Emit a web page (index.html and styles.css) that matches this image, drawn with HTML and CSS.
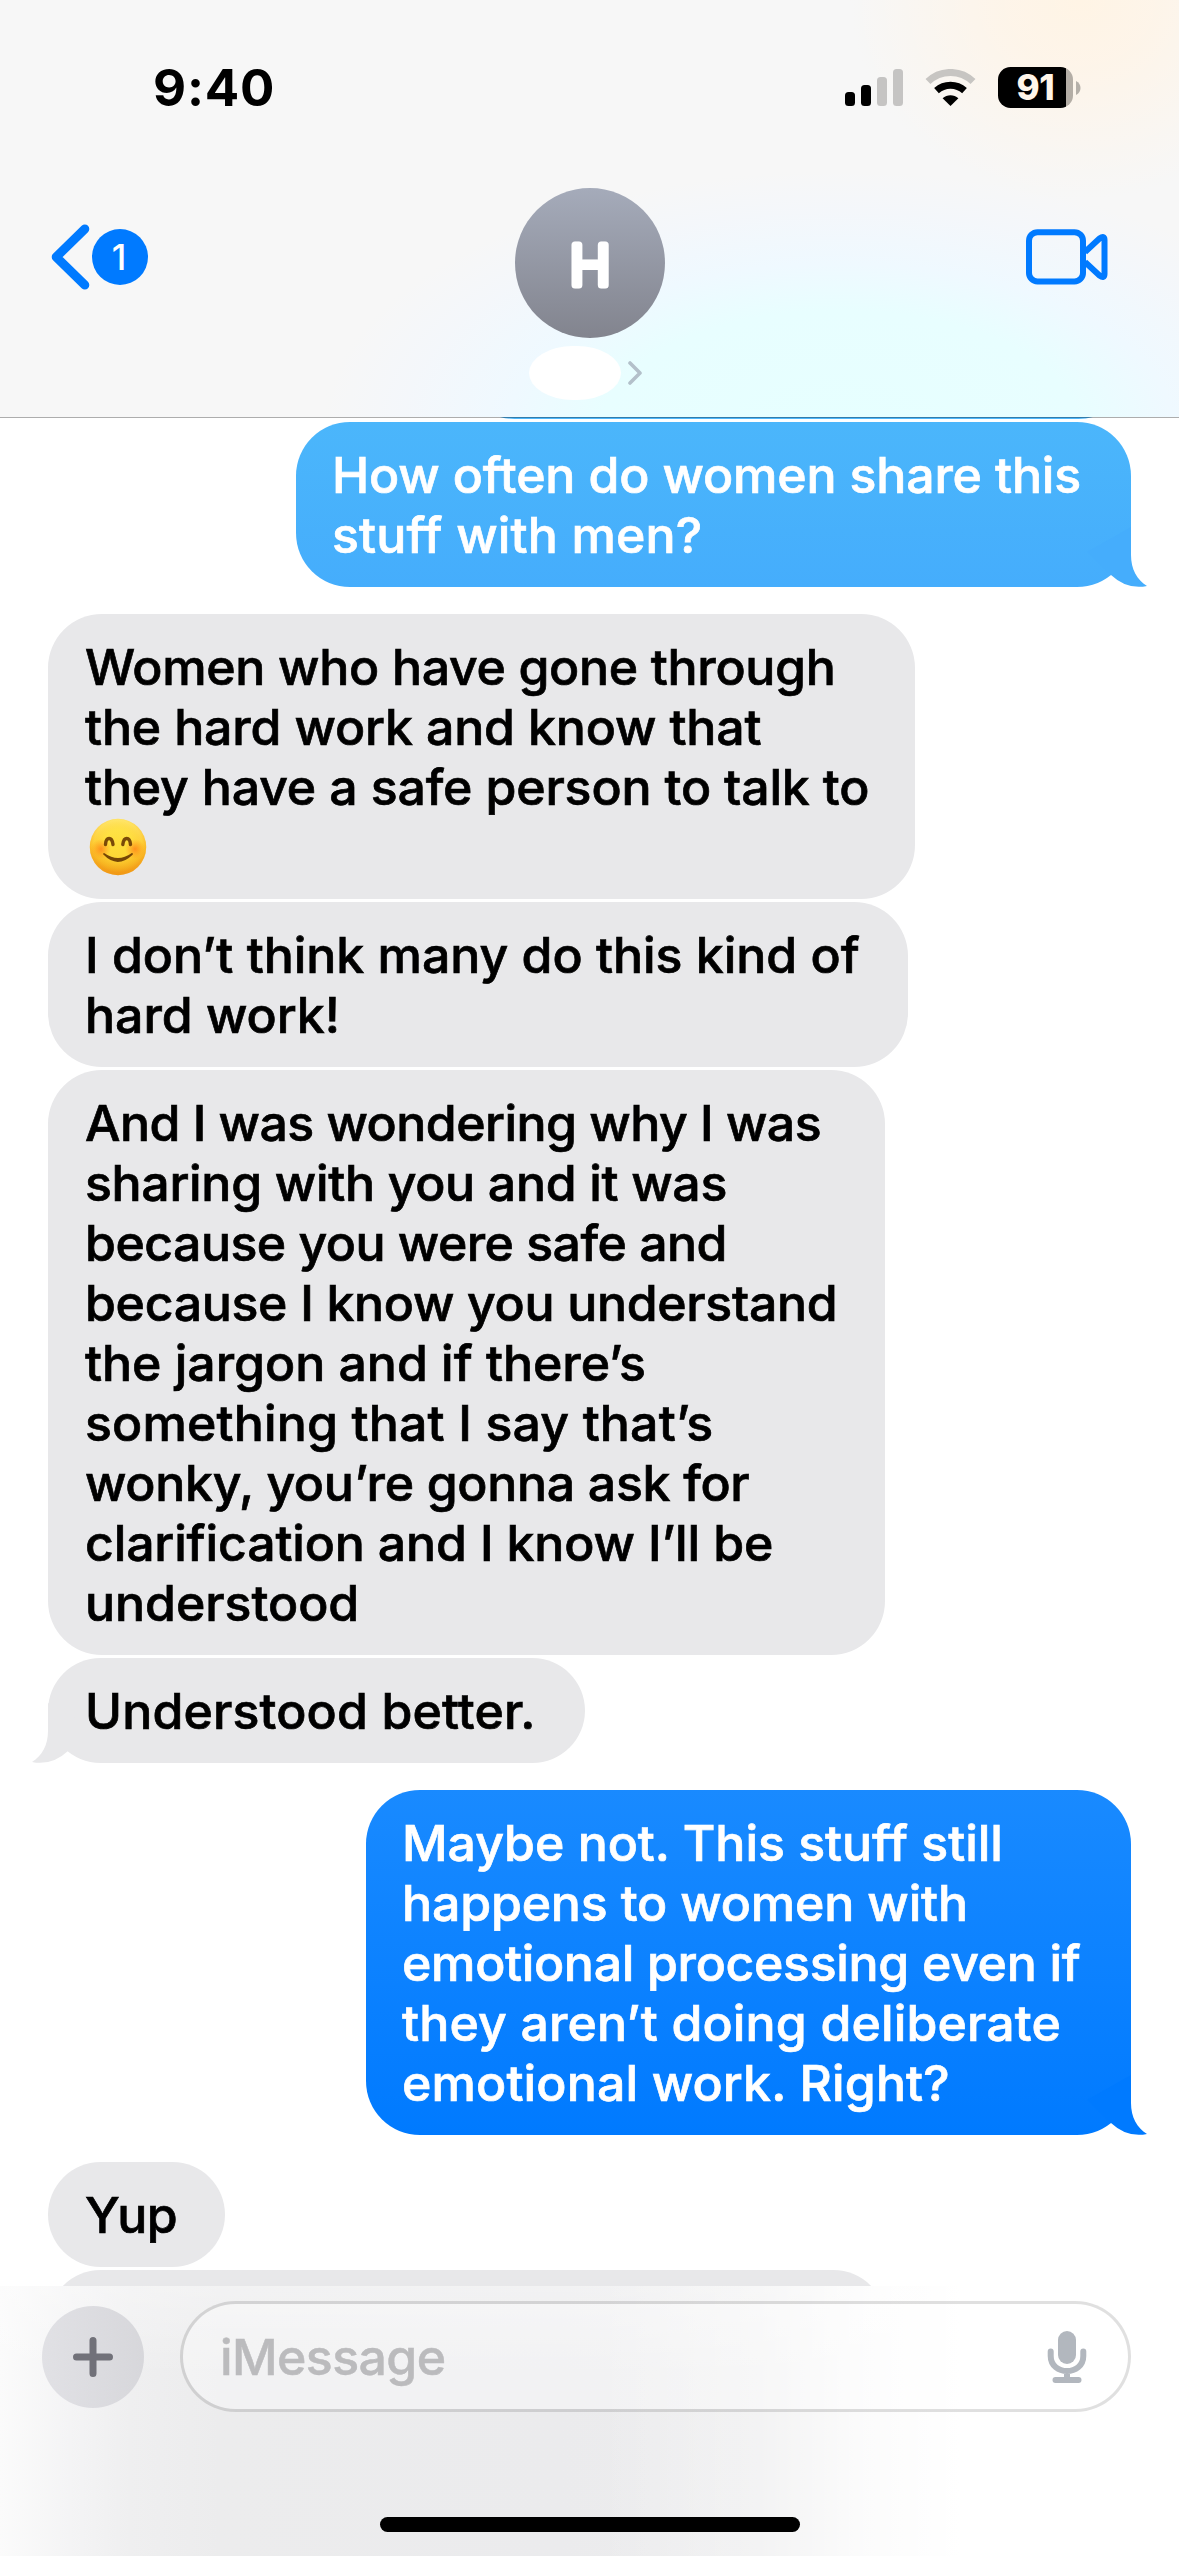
FILE: index.html
```html
<!DOCTYPE html>
<html lang="en">
<head>
<meta charset="utf-8">
<title>Messages</title>
<link rel="stylesheet" href="styles.css">
</head>
<body>
<div class="screen">
  <header class="header">
    <div class="status">
      <time class="clock">9:40</time>
      <div class="indicators">
        <svg class="signal" width="58" height="37" viewBox="0 0 58 37">
          <rect x="0" y="23" width="10" height="14" rx="3.5"/>
          <rect x="16" y="16" width="10" height="21" rx="3.5"/>
          <rect class="dim" x="32" y="8" width="10" height="29" rx="3.5"/>
          <rect class="dim" x="48" y="0" width="10" height="37" rx="3.5"/>
        </svg>
        <svg class="wifi" width="51" height="37" viewBox="0 0 51 37">
          <path class="arc dim-arc" d="M3 12.6C15.500 0.400 35.500 0.400 48 12.600"/>
          <path class="arc" d="M11.500 21.600C19.500 14.300 31.500 14.300 39.500 21.600"/>
          <path d="M25.500 37L17.600 29.200C22 25.300 29 25.300 33.400 29.200Z"/>
        </svg>
        <div class="battery">
          <div class="cell">91</div>
          <svg width="5" height="14" viewBox="0 0 5 14"><path class="cap" d="M0 0C6 3 6 11 0 14Z"/></svg>
        </div>
      </div>
    </div>
    <nav class="nav">
      <div class="back">
        <svg width="40" height="66" viewBox="0 0 40 66"><path d="M33.800 5L5.200 33L33.800 61"/></svg>
        <span class="unread">1</span>
      </div>
      <div class="contact">
        <svg class="avatar" width="150" height="150" viewBox="0 0 150 150">
          <defs><linearGradient id="avatarFill" x1="0" y1="0" x2="0" y2="1"><stop offset="0" stop-color="#a5abba"/><stop offset="1" stop-color="#82848e"/></linearGradient></defs>
          <circle cx="75" cy="75" r="75" fill="url(#avatarFill)"/>
          <text x="75" y="96.500" text-anchor="middle">H</text>
        </svg>
        <div class="name">
          <span class="name-pill"></span>
          <svg width="14" height="24" viewBox="0 0 14 24"><path d="M2 2L12 12L2 22"/></svg>
        </div>
      </div>
      <svg class="video" width="82" height="56" viewBox="0 0 82 56">
        <rect x="3" y="3.200" width="54" height="49.200" rx="8.500"/>
        <path d="M59 23L73.500 9.500Q78.500 6 78.500 11V45Q78.500 50 73.500 46.500L59 33"/>
      </svg>
    </nav>
  </header>

  <main class="thread">
    <div class="bubble sent previous"></div>
    <div class="bubble sent share">
      <span class="line close">How often do women share this</span>
      <span class="line even">stuff with men?</span>
      <svg class="tail" width="60" height="60" viewBox="0 0 60 60"><path d="M44 0V28C44 42 50 53 60 59Q40 63 24 48L0 25Z"/></svg>
    </div>
    <div class="bubble received first w-safe">
      <span class="line snug">Women who have gone through</span>
      <span class="line close">the hard work and know that</span>
      <span class="line close">they have a safe person to talk to</span>
      <span class="line emoji-line"><svg class="emoji" role="img" aria-label="😊" width="58" height="58" viewBox="0 0 58 58">
        <defs>
          <linearGradient id="face" x1="0" y1="0" x2="0" y2="1"><stop offset="0" stop-color="#fff083"/><stop offset=".5" stop-color="#fdc92e"/><stop offset="1" stop-color="#ee9612"/></linearGradient>
          <radialGradient id="glow" cx=".5" cy=".45" r=".5"><stop offset=".5" stop-color="#ffe23c" stop-opacity=".75"/><stop offset=".85" stop-color="#ffd02e" stop-opacity=".3"/><stop offset="1" stop-color="#f59b1a" stop-opacity=".35"/></radialGradient>
          <radialGradient id="blush"><stop offset="0" stop-color="#ff7b16" stop-opacity=".75"/><stop offset="1" stop-color="#ff8a1c" stop-opacity="0"/></radialGradient>
        </defs>
        <circle cx="29" cy="29" r="28.200" fill="url(#face)"/>
        <circle cx="29" cy="29" r="28.200" fill="url(#glow)"/>
        <circle cx="12" cy="31" r="10" fill="url(#blush)"/>
        <circle cx="46" cy="31" r="10" fill="url(#blush)"/>
        <path class="feature" d="M16.500 26.500C17 18.500 23 18.500 24 26.500M33.800 26.500C34.800 18.500 40.800 18.500 41.500 26.500"/>
        <path class="smile" d="M15 36Q28.500 50 43 36Q29 46 15 36Z"/>
      </svg></span>
    </div>
    <div class="bubble received w-kind">
      <span class="line">I don’t think many do this kind of</span>
      <span class="line">hard work!</span>
    </div>
    <div class="bubble received w-jargon">
      <span class="line tight">And I was wondering why I was</span>
      <span class="line snug">sharing with you and it was</span>
      <span class="line tight">because you were safe and</span>
      <span class="line snug">because I know you understand</span>
      <span class="line">the jargon and if there’s</span>
      <span class="line even">something that I say that’s</span>
      <span class="line snug">wonky, you’re gonna ask for</span>
      <span class="line close">clarification and I know I’ll be</span>
      <span class="line">understood</span>
    </div>
    <div class="bubble received w-better">
      <span class="line even">Understood better.</span>
      <svg class="tail" width="60" height="60" viewBox="0 0 60 60"><path d="M44 0V28C44 42 50 53 60 59Q40 63 24 48L0 25Z"/></svg>
    </div>
    <div class="bubble sent maybe first">
      <span class="line">Maybe not. This stuff still</span>
      <span class="line close">happens to women with</span>
      <span class="line snug">emotional processing even if</span>
      <span class="line even">they aren’t doing deliberate</span>
      <span class="line even">emotional work. Right?</span>
      <svg class="tail" width="60" height="60" viewBox="0 0 60 60"><path d="M44 0V28C44 42 50 53 60 59Q40 63 24 48L0 25Z"/></svg>
    </div>
    <div class="bubble received first w-yup"><span class="line tight">Yup</span></div>
    <div class="bubble received next"></div>
  </main>

  <footer class="composer">
    <div class="controls">
      <div class="plus">
        <svg width="40" height="40" viewBox="0 0 40 40"><path d="M20 3.500V36.500M3.500 20H36.500"/></svg>
      </div>
      <div class="field">
        <span class="placeholder">iMessage</span>
        <svg class="mic" width="40" height="54" viewBox="0 0 40 54">
          <rect x="11" y="1" width="18" height="33" rx="9"/>
          <path d="M3.700 21.500V26C3.700 46 36.300 46 36.300 26V21.500M20 41V50M8.500 50H31.500"/>
        </svg>
      </div>
    </div>
    <div class="home-bar"></div>
  </footer>
</div>
</body>
</html>
```
FILE: styles.css
```css
* { box-sizing: border-box; }

body {
  margin: 0;
  background: #fff;
  font-family: Inter, "Liberation Sans", sans-serif;
  font-weight: 500;
}

svg { display: block; flex: none; }

.screen {
  display: flex;
  flex-direction: column;
  width: 1179px;
  height: 2556px;
  overflow: hidden;
  background: #fff;
}

/* Header */
.header {
  position: relative;
  z-index: 1;
  flex: none;
  height: 417px;
  background:
    radial-gradient(ellipse 230px 200px at 1080px 0, #fff4e5 0%, #fff4e6cc 35%, #fff4e600 100%),
    radial-gradient(ellipse 520px 260px at 840px 430px, #e6ffff 0%, #e8feff 46%, #eff9ff 64%, #f2f7fd99 84%, #f7f7f700 100%),
    #f7f7f7;
  box-shadow: 0 1px 0 rgba(0, 0, 0, .32);
}

.status {
  display: flex;
  justify-content: space-between;
  height: 188px;
  padding: 58px 98px 0 153px;
}

.clock {
  font-size: 51px;
  line-height: 60px;
  font-weight: 700;
  letter-spacing: .8px;
}

.indicators {
  display: flex;
  align-items: flex-start;
  padding-top: 9px;
}

.signal, .wifi { margin-top: 2px; }
.signal { margin-right: 22px; }
.wifi { margin-right: 22px; }
.dim { fill: #c5c4c3; }
.arc { fill: none; stroke: #000; stroke-width: 7; }
.dim-arc { stroke: #c7c5c2; }

.battery { display: flex; align-items: center; gap: 3px; }

.cell {
  width: 75px;
  height: 41px;
  border-radius: 12.500px;
  background: linear-gradient(90deg, #000 68px, #b4aea6 68px);
  color: #fff5e9;
  font-size: 35px;
  line-height: 41px;
  font-weight: 800;
  letter-spacing: -.2px;
  text-align: center;
}

.cap { fill: #b5b0a9; }

.nav {
  display: grid;
  grid-template-columns: 1fr 150px 1fr;
  padding: 0 71px 0 51px;
}

.back { display: flex; align-items: center; height: 66px; margin-top: 36px; }
.back path { fill: none; stroke: #007aff; stroke-width: 9; stroke-linecap: round; stroke-linejoin: round; }

.unread {
  width: 56px;
  height: 56px;
  padding-right: 2px;
  margin-left: 1px;
  border-radius: 50%;
  background: #007aff;
  color: #fff;
  font-size: 35px;
  line-height: 56px;
  text-align: center;
}

.contact { display: flex; flex-direction: column; align-items: center; gap: 8px; margin: 0 -10px 0 10px; }

.avatar text {
  fill: #fff;
  stroke: #fff;
  stroke-width: 7px;
  stroke-linejoin: round;
  font-size: 55px;
  font-weight: 300;
}

.name { display: flex; align-items: center; gap: 7px; margin-right: 9px; }
.name-pill { width: 92px; height: 54px; border-radius: 50% / 52%; background: #fff; }
.name path { fill: none; stroke: #b3c0ca; stroke-width: 3.600; stroke-linecap: round; stroke-linejoin: round; }

.video { justify-self: end; margin-top: 41px; fill: none; stroke: #007aff; stroke-width: 6; stroke-linejoin: round; }

/* Conversation */
.thread {
  display: flex;
  flex-direction: column;
  flex: 1;
  min-height: 0;
  gap: 3px;
  padding: 0 48px;
  overflow: hidden;
}

.bubble {
  position: relative;
  flex: none;
  padding: 23px 36px 22px;
  border-radius: 54px;
  font-size: 50px;
  line-height: 60px;
  white-space: nowrap;
}

.line { display: block; height: 60px; letter-spacing: -.03px; -webkit-text-stroke: .7px; }
.close { letter-spacing: -.16px; }
.snug { letter-spacing: -.32px; }
.tight { letter-spacing: -.53px; }
.even { letter-spacing: .15px; }

.received { align-self: flex-start; padding-left: 37px; background: #e8e8ea; color: #000; }
.sent { align-self: flex-end; color: #fff; }
.first { margin-top: 24px; }

.previous { width: 669px; height: 105px; margin-top: -103px; background: #4db7fb; }
.share { width: 835px; background: linear-gradient(#4bb6fb, #45adfc); }
.maybe { width: 765px; background: linear-gradient(#198aff, #007aff); }
.w-safe { width: 867px; }
.w-kind { width: 860px; }
.w-jargon { width: 837px; }
.w-better { width: 537px; }
.w-yup { width: 177px; }
.next { width: 838px; height: 105px; }

.tail { position: absolute; right: -16px; bottom: 0; fill: #e8e8ea; }
.received .tail { right: auto; left: -16px; transform: scaleX(-1); }
.share .tail { fill: #45adfc; }
.maybe .tail { fill: #007aff; }

.emoji-line { display: flex; align-items: center; padding: 0 0 1px 4px; }
.feature { fill: none; stroke: #7a4a08; stroke-width: 3.400; stroke-linecap: round; }
.smile { fill: #754606; stroke: #754606; stroke-width: 1.800; stroke-linejoin: round; }

/* Composer */
.composer {
  display: flex;
  flex-direction: column;
  align-items: center;
  justify-content: space-between;
  flex: none;
  height: 270px;
  padding: 15px 48px 24px 42px;
  background:
    linear-gradient(#ffffff59, #fff0 90px),
    linear-gradient(90deg, #fff0 600px, #ffffff59 760px, #ffffffcc 860px, #fff 960px),
    linear-gradient(90deg, #fbfbfb 0, #f4f4f5 70px, #efeff0 130px, #ececed 220px, #ebebed 560px, #ededee 760px);
}

.controls { display: flex; align-items: center; gap: 36px; width: 100%; }

.plus {
  display: grid;
  place-items: center;
  flex: none;
  width: 102px;
  height: 102px;
  border-radius: 50%;
  background: linear-gradient(90deg, #e1e1e5, #d7d7db);
}

.plus path { stroke: #717179; stroke-width: 7; stroke-linecap: round; }

.field {
  display: flex;
  align-items: center;
  justify-content: space-between;
  flex: 1;
  height: 111px;
  padding: 0 41px 0 37px;
  border: 3px solid rgba(0, 0, 0, .12);
  border-radius: 56px;
  background: rgba(255, 255, 255, .35);
  background-clip: padding-box;
}

.placeholder { color: #bbbbbd; font-size: 50px; line-height: 60px; letter-spacing: -.6px; -webkit-text-stroke: .5px; }

.mic { fill: #b2b7be; stroke-linecap: round; }
.mic path { fill: none; stroke: #b2b7be; stroke-width: 6; }

.home-bar { width: 420px; height: 15px; margin-left: 7px; border-radius: 8px; background: #000; }
```
